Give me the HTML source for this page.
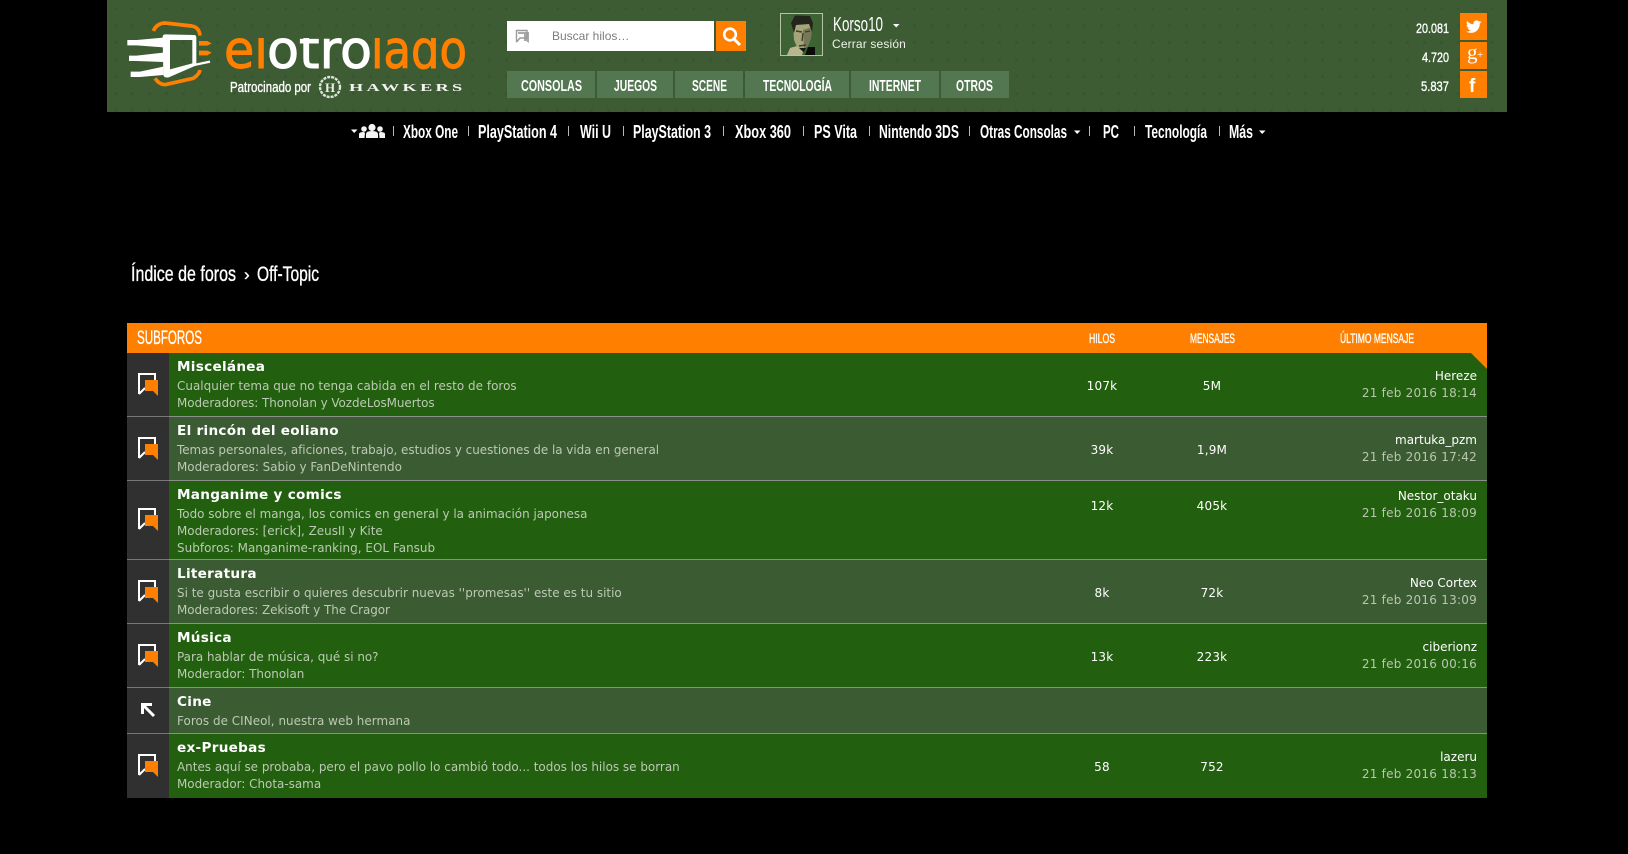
<!DOCTYPE html>
<html lang="es"><head><meta charset="utf-8"><title>Off-Topic</title>
<style>
html,body{margin:0;padding:0;background:#000;width:1628px;height:854px;overflow:hidden}
#p{position:relative;width:1628px;height:854px;overflow:hidden;font-family:"DejaVu Sans",sans-serif;font-size:12px;color:#fff}
#p div{position:absolute}
.hd{left:107px;top:0;width:1400px;height:112px;background-color:#3d5c33;background-image:radial-gradient(circle,#365430 1.2px,transparent 1.6px);background-size:17px 17px}
.tab{top:71px;height:27px;background:#537750}
.row{left:127px;width:1360px}
.ln{left:50px;white-space:nowrap;line-height:18px;height:18px;color:#bcc9b4;font-size:11.95px}
.t{left:50px;white-space:nowrap;line-height:20px;height:20px;font-weight:bold;font-size:13.6px;letter-spacing:.28px;color:#fff}
.n{white-space:nowrap;line-height:18px;height:18px;color:#fff;text-align:center;width:100px;font-size:12px;letter-spacing:.2px}
.r{right:10px;white-space:nowrap;line-height:18px;height:18px;text-align:right;font-size:12px}
.d{letter-spacing:.24px;color:#b9c6b0}
.g{background:#225f0f}.a{background:#3b5b33}
.sep{height:1px;left:127px;width:1360px;background:#8a8f88}
.soc{left:1460px;width:27px;height:27px;background:#ff8000}
svg{position:absolute;overflow:visible}
text{fill:#fff;font-family:"Liberation Sans",sans-serif}
.m{stroke:#fff;stroke-width:.35px}
.lg{font-family:"DejaVu Sans",sans-serif;stroke-width:1px}
</style></head><body><div id="p">
<div class="hd"></div>
<div class="tab" style="left:507px;width:88px"></div>
<div class="tab" style="left:597px;width:76px"></div>
<div class="tab" style="left:675px;width:68px"></div>
<div class="tab" style="left:745px;width:104px"></div>
<div class="tab" style="left:851px;width:88px"></div>
<div class="tab" style="left:941px;width:68px"></div>
<div style="left:507px;top:21px;width:207px;height:30px;background:#fff"></div>
<div style="left:716px;top:21px;width:30px;height:30px;background:#ff8000"></div>
<div style="left:552px;top:27px;font:12px/19px 'Liberation Sans',sans-serif;color:#7d7d7d;white-space:nowrap">Buscar hilos…</div>
<div style="left:832px;top:35px;font:12px/18px 'Liberation Sans',sans-serif;letter-spacing:.15px;color:#eef2ea;white-space:nowrap">Cerrar sesión</div>
<div class="soc" style="top:13px"></div><div class="soc" style="top:42px"></div><div class="soc" style="top:71px"></div>

<div style="left:127px;top:323px;width:1360px;height:30px;background:#ff8000"></div>
<div class="row g" style="top:353px;height:63px"></div>
<div class="row a" style="top:417px;height:63px"></div>
<div class="row g" style="top:481px;height:78px"></div>
<div class="row a" style="top:560px;height:63px"></div>
<div class="row g" style="top:624px;height:63px"></div>
<div class="row a" style="top:688px;height:45px"></div>
<div class="row g" style="top:734px;height:64px"></div>
<div class="sep" style="top:416px"></div><div class="sep" style="top:480px"></div><div class="sep" style="top:559px"></div><div class="sep" style="top:623px"></div><div class="sep" style="top:687px"></div><div class="sep" style="top:733px"></div>
<div style="left:127px;top:353px;width:42px;height:445px;background:#303030"></div>
<div class="sep" style="top:416px;width:42px;background:#777"></div><div class="sep" style="top:480px;width:42px;background:#777"></div><div class="sep" style="top:559px;width:42px;background:#777"></div><div class="sep" style="top:623px;width:42px;background:#777"></div><div class="sep" style="top:687px;width:42px;background:#777"></div><div class="sep" style="top:733px;width:42px;background:#777"></div>

<!-- row 1 -->
<div class="row" style="top:353px;height:63px">
<div class="t" style="top:4px">Miscelánea</div>
<div class="ln" style="top:24px;letter-spacing:.03px">Cualquier tema que no tenga cabida en el resto de foros</div>
<div class="ln" style="top:41px;letter-spacing:-.05px">Moderadores: Thonolan y VozdeLosMuertos</div>
<div class="n" style="left:925px;top:24px">107k</div><div class="n" style="left:1035px;top:24px">5M</div>
<div class="r" style="top:14px">Hereze</div><div class="r d" style="top:31px">21 feb 2016 18:14</div>
</div>
<!-- row 2 -->
<div class="row" style="top:417px;height:63px">
<div class="t" style="top:4px">El rincón del eoliano</div>
<div class="ln" style="top:24px;letter-spacing:-.025px">Temas personales, aficiones, trabajo, estudios y cuestiones de la vida en general</div>
<div class="ln" style="top:41px">Moderadores: Sabio y FanDeNintendo</div>
<div class="n" style="left:925px;top:24px">39k</div><div class="n" style="left:1035px;top:24px">1,9M</div>
<div class="r" style="top:14px">martuka_pzm</div><div class="r d" style="top:31px">21 feb 2016 17:42</div>
</div>
<!-- row 3 -->
<div class="row" style="top:481px;height:78px">
<div class="t" style="top:4px">Manganime y comics</div>
<div class="ln" style="top:24px">Todo sobre el manga, los comics en general y la animación japonesa</div>
<div class="ln" style="top:41px">Moderadores: [erick], ZeusII y Kite</div>
<div class="ln" style="top:58px;letter-spacing:.04px">Subforos: Manganime-ranking, EOL Fansub</div>
<div class="n" style="left:925px;top:16px">12k</div><div class="n" style="left:1035px;top:16px">405k</div>
<div class="r" style="top:6px">Nestor_otaku</div><div class="r d" style="top:23px">21 feb 2016 18:09</div>
</div>
<!-- row 4 -->
<div class="row" style="top:560px;height:63px">
<div class="t" style="top:4px">Literatura</div>
<div class="ln" style="top:24px;letter-spacing:.01px">Si te gusta escribir o quieres descubrir nuevas ''promesas'' este es tu sitio</div>
<div class="ln" style="top:41px;letter-spacing:-.05px">Moderadores: Zekisoft y The Cragor</div>
<div class="n" style="left:925px;top:24px">8k</div><div class="n" style="left:1035px;top:24px">72k</div>
<div class="r" style="top:14px">Neo Cortex</div><div class="r d" style="top:31px">21 feb 2016 13:09</div>
</div>
<!-- row 5 -->
<div class="row" style="top:624px;height:63px">
<div class="t" style="top:4px">Música</div>
<div class="ln" style="top:24px">Para hablar de música, qué si no?</div>
<div class="ln" style="top:41px">Moderador: Thonolan</div>
<div class="n" style="left:925px;top:24px">13k</div><div class="n" style="left:1035px;top:24px">223k</div>
<div class="r" style="top:14px">ciberionz</div><div class="r d" style="top:31px">21 feb 2016 00:16</div>
</div>
<!-- row 6 -->
<div class="row" style="top:688px;height:45px">
<div class="t" style="top:4px">Cine</div>
<div class="ln" style="top:24px;letter-spacing:.04px">Foros de CINeol, nuestra web hermana</div>
</div>
<!-- row 7 -->
<div class="row" style="top:734px;height:64px">
<div class="t" style="top:4px">ex-Pruebas</div>
<div class="ln" style="top:24px;letter-spacing:.01px">Antes aquí se probaba, pero el pavo pollo lo cambió todo... todos los hilos se borran</div>
<div class="ln" style="top:41px">Moderador: Chota-sama</div>
<div class="n" style="left:925px;top:24px">58</div><div class="n" style="left:1035px;top:24px">752</div>
<div class="r" style="top:14px">lazeru</div><div class="r d" style="top:31px">21 feb 2016 18:13</div>
</div>

<svg width="1628" height="854" viewBox="0 0 1628 854" style="left:0;top:0">
<defs>
<clipPath id="lc"><rect x="220" y="38" width="255" height="32"/></clipPath>
<g id="fi">
<path d="M1 21V1H17V7M1 21L7 15" fill="none" stroke="#fff" stroke-width="2"/>
<path d="M7 7H20V18H7Z" fill="#ff8000"/><path d="M15 18H20V23Z" fill="#ff8000"/>
</g>
</defs>

<!-- logo mark -->
<g transform="translate(120 15) scale(.3333)">
<path d="M100 48Q110 25 135 24L215 33Q238 37 240 62" fill="none" stroke="#ff8000" stroke-width="11"/>
<path d="M105 190Q120 212 140 208L220 190Q238 178 240 165" fill="none" stroke="#ff8000" stroke-width="11"/>
<path fill-rule="evenodd" d="M136 58L222 60Q229 60 229 68V146Q229 152 222 154L146 187Q132 190 130 180L128 66Q128 58 136 58ZM150 75V163L217 145V75Z" fill="#fff"/>
<path d="M22 75H50L130 68V97L50 91H22ZM27 122H50L130 113V141L50 138H27ZM32 170H60L130 155V180L60 186H32Z" fill="#fff"/>
<path d="M222 150L270 140" stroke="#fff" stroke-width="7"/>
<path d="M237 78H262L275 85L262 92H237ZM237 107H262L275 113L262 121H237Z" fill="#ff8000"/>
</g>
<g clip-path="url(#lc)">
<text class="lg" x="224" y="68" font-size="53" textLength="44" lengthAdjust="spacingAndGlyphs" style="fill:#ff8000;stroke:#ff8000">el</text>
<text class="lg" x="267" y="68" font-size="53" textLength="105" lengthAdjust="spacingAndGlyphs" style="fill:#fff;stroke:#fff">otro</text>
<text class="lg" x="371" y="68" font-size="53" textLength="96" lengthAdjust="spacingAndGlyphs" style="fill:#ff8000;stroke:#ff8000">lado</text>
</g>
<text class="m" x="230" y="92" font-size="15" textLength="81" lengthAdjust="spacingAndGlyphs">Patrocinado por</text>
<circle cx="330" cy="87" r="10" fill="none" stroke="#dfe4da" stroke-width="2.4" stroke-dasharray="3 1"/>
<text x="330" y="92" font-size="13" font-weight="bold" text-anchor="middle" style="font-family:'Liberation Serif',serif;fill:#eef0ea">H</text>
<text transform="translate(349 91) scale(1.66 1)" font-size="11" font-weight="bold" letter-spacing="2" style="font-family:'Liberation Serif',serif;fill:#f2f4ef">HAWKERS</text>

<!-- tabs -->
<g font-size="16" font-weight="bold">
<text x="521" y="91" textLength="61" lengthAdjust="spacingAndGlyphs">CONSOLAS</text>
<text x="614" y="91" textLength="43" lengthAdjust="spacingAndGlyphs">JUEGOS</text>
<text x="692" y="91" textLength="35" lengthAdjust="spacingAndGlyphs">SCENE</text>
<text x="763" y="91" textLength="69" lengthAdjust="spacingAndGlyphs">TECNOLOGÍA</text>
<text x="869" y="91" textLength="52" lengthAdjust="spacingAndGlyphs">INTERNET</text>
<text x="956" y="91" textLength="37" lengthAdjust="spacingAndGlyphs">OTROS</text>
</g>

<!-- search icons -->
<path d="M518 32H529V43L526 41H524V34H518Z" fill="#a9a9a9"/><path d="M516.500 30.500H527V38H520L517 41.500H516.500Z" fill="none" stroke="#9b9b9b" stroke-width="1.400"/>
<circle cx="730" cy="34.500" r="5.800" fill="none" stroke="#fff" stroke-width="2.600"/><path d="M734 39L740 45" stroke="#fff" stroke-width="3"/>

<!-- avatar -->
<rect x="780.500" y="13.500" width="42" height="42" fill="#3d6334" stroke="#b5c2a6"/>
<path d="M793 24H812L811 38L808 46L803 50L797 47L794 40Z" fill="#a5a57a"/>
<path d="M803 30L812 27L811 38L808 46L804 49Z" fill="#77785a"/>
<path d="M791 23L795 15.500L810 16L813 23L812 32L809 24L796 25L794 33Z" fill="#23251b"/>
<path d="M796 31L802 32M805 32L810 31M803 33L802 41M799 46L806 45" stroke="#3f3f2a" stroke-width="1.400" fill="none"/>
<path d="M787 55L790 48L797 46L803 52L802 55Z" fill="#b8b68f"/>
<path d="M799 48L806 48L804 52Z" fill="#1a1a12"/>
<path d="M808 47H815V55H805Z" fill="#0b0b08"/>

<!-- user -->
<text x="833" y="31" font-size="20" textLength="50" lengthAdjust="spacingAndGlyphs">Korso10</text>
<path d="M893 24H899.500L896.200 27.500Z" fill="#fff"/>

<!-- social -->
<g font-size="14">
<text class="m" x="1416" y="33" textLength="33" lengthAdjust="spacingAndGlyphs">20.081</text>
<text class="m" x="1422" y="62" textLength="27" lengthAdjust="spacingAndGlyphs">4.720</text>
<text class="m" x="1421" y="91" textLength="28" lengthAdjust="spacingAndGlyphs">5.837</text>
</g>
<path transform="translate(1466 19) scale(.64)" fill="#fff" d="M23.950 4.570a10 10 0 0 1-2.820.770 4.960 4.960 0 0 0 2.160-2.720c-.950.550-2 .950-3.120 1.180a4.920 4.920 0 0 0-8.380 4.480C7.690 8.100 4.070 6.130 1.640 3.160a4.820 4.820 0 0 0-.660 2.470c0 1.710.870 3.210 2.190 4.100a4.900 4.900 0 0 1-2.230-.620v.060a4.920 4.920 0 0 0 3.950 4.830 5 5 0 0 1-2.210.080 4.940 4.940 0 0 0 4.600 3.420A9.870 9.870 0 0 1 0 19.540a13.940 13.940 0 0 0 7.550 2.210c9.050 0 14-7.500 14-13.980 0-.210 0-.420-.01-.630A9.940 9.940 0 0 0 24 4.590z"/>
<text x="1467" y="59" font-size="21" style="font-family:'Liberation Serif',serif">g</text>
<text x="1477" y="58" font-size="11" style="font-family:'Liberation Serif',serif">+</text>
<text x="1469" y="92" font-size="19" font-weight="bold">f</text>

<!-- forum nav -->
<path d="M351 129.500H357.500L354.200 133Z" fill="#fff"/>
<g fill="#f4f4f4">
<circle cx="372" cy="127.500" r="3.600"/><path d="M366 138V134Q366 131 372 131Q378 131 378 134V138Z"/>
<circle cx="364" cy="129" r="2.800"/><path d="M359 138V134Q359 132 364 132L365 133L364.500 138Z"/>
<circle cx="380" cy="129" r="2.800"/><path d="M385 138V134Q385 132 380 132L379 133L379.500 138Z"/>
</g>
<g font-size="18" font-weight="bold">
<text x="403" y="138" textLength="55" lengthAdjust="spacingAndGlyphs">Xbox One</text>
<text x="478" y="138" textLength="79" lengthAdjust="spacingAndGlyphs">PlayStation 4</text>
<text x="580" y="138" textLength="31" lengthAdjust="spacingAndGlyphs">Wii U</text>
<text x="633" y="138" textLength="78" lengthAdjust="spacingAndGlyphs">PlayStation 3</text>
<text x="735" y="138" textLength="56" lengthAdjust="spacingAndGlyphs">Xbox 360</text>
<text x="814" y="138" textLength="43" lengthAdjust="spacingAndGlyphs">PS Vita</text>
<text x="879" y="138" textLength="80" lengthAdjust="spacingAndGlyphs">Nintendo 3DS</text>
<text x="980" y="138" textLength="87" lengthAdjust="spacingAndGlyphs">Otras Consolas</text>
<text x="1103" y="138" textLength="16" lengthAdjust="spacingAndGlyphs">PC</text>
<text x="1145" y="138" textLength="62" lengthAdjust="spacingAndGlyphs">Tecnología</text>
<text x="1229" y="138" textLength="24" lengthAdjust="spacingAndGlyphs">Más</text>
</g>
<path d="M1074 130.500H1080.500L1077.200 134ZM1259 130.500H1265.500L1262.200 134Z" fill="#fff"/>
<path d="M393.500 126V136M468.500 126V136M568.500 126V136M623.500 126V136M723.500 126V136M803.500 126V136M869.500 126V136M969.500 126V136M1089.500 126V136M1134.500 126V136M1219.500 126V136" stroke="#b8b8b8"/>

<!-- breadcrumb -->
<g font-size="21">
<text class="m" x="131" y="281" textLength="105" lengthAdjust="spacingAndGlyphs">Índice de foros</text>
<text class="m" x="244" y="280" font-size="17">›</text>
<text class="m" x="257" y="281" textLength="62" lengthAdjust="spacingAndGlyphs">Off-Topic</text>
</g>

<!-- table head -->
<text class="m" x="137" y="344" font-size="19" textLength="65" lengthAdjust="spacingAndGlyphs">SUBFOROS</text>
<g font-size="14">
<text class="m" x="1089" y="343" textLength="26" lengthAdjust="spacingAndGlyphs">HILOS</text>
<text class="m" x="1190" y="343" textLength="45" lengthAdjust="spacingAndGlyphs">MENSAJES</text>
<text class="m" x="1340" y="343" textLength="74" lengthAdjust="spacingAndGlyphs">ÚLTIMO MENSAJE</text>
</g>
<path d="M1471 353H1487V369Z" fill="#ff8000"/>

<!-- row icons -->
<use href="#fi" x="138" y="373"/>
<use href="#fi" x="138" y="437"/>
<use href="#fi" x="138" y="508"/>
<use href="#fi" x="138" y="580"/>
<use href="#fi" x="138" y="644"/>
<use href="#fi" x="138" y="754"/>
<path d="M142.500 714V704.500H152M143.500 705.500L154 716" fill="none" stroke="#fff" stroke-width="3"/>
</svg>
</div></body></html>
